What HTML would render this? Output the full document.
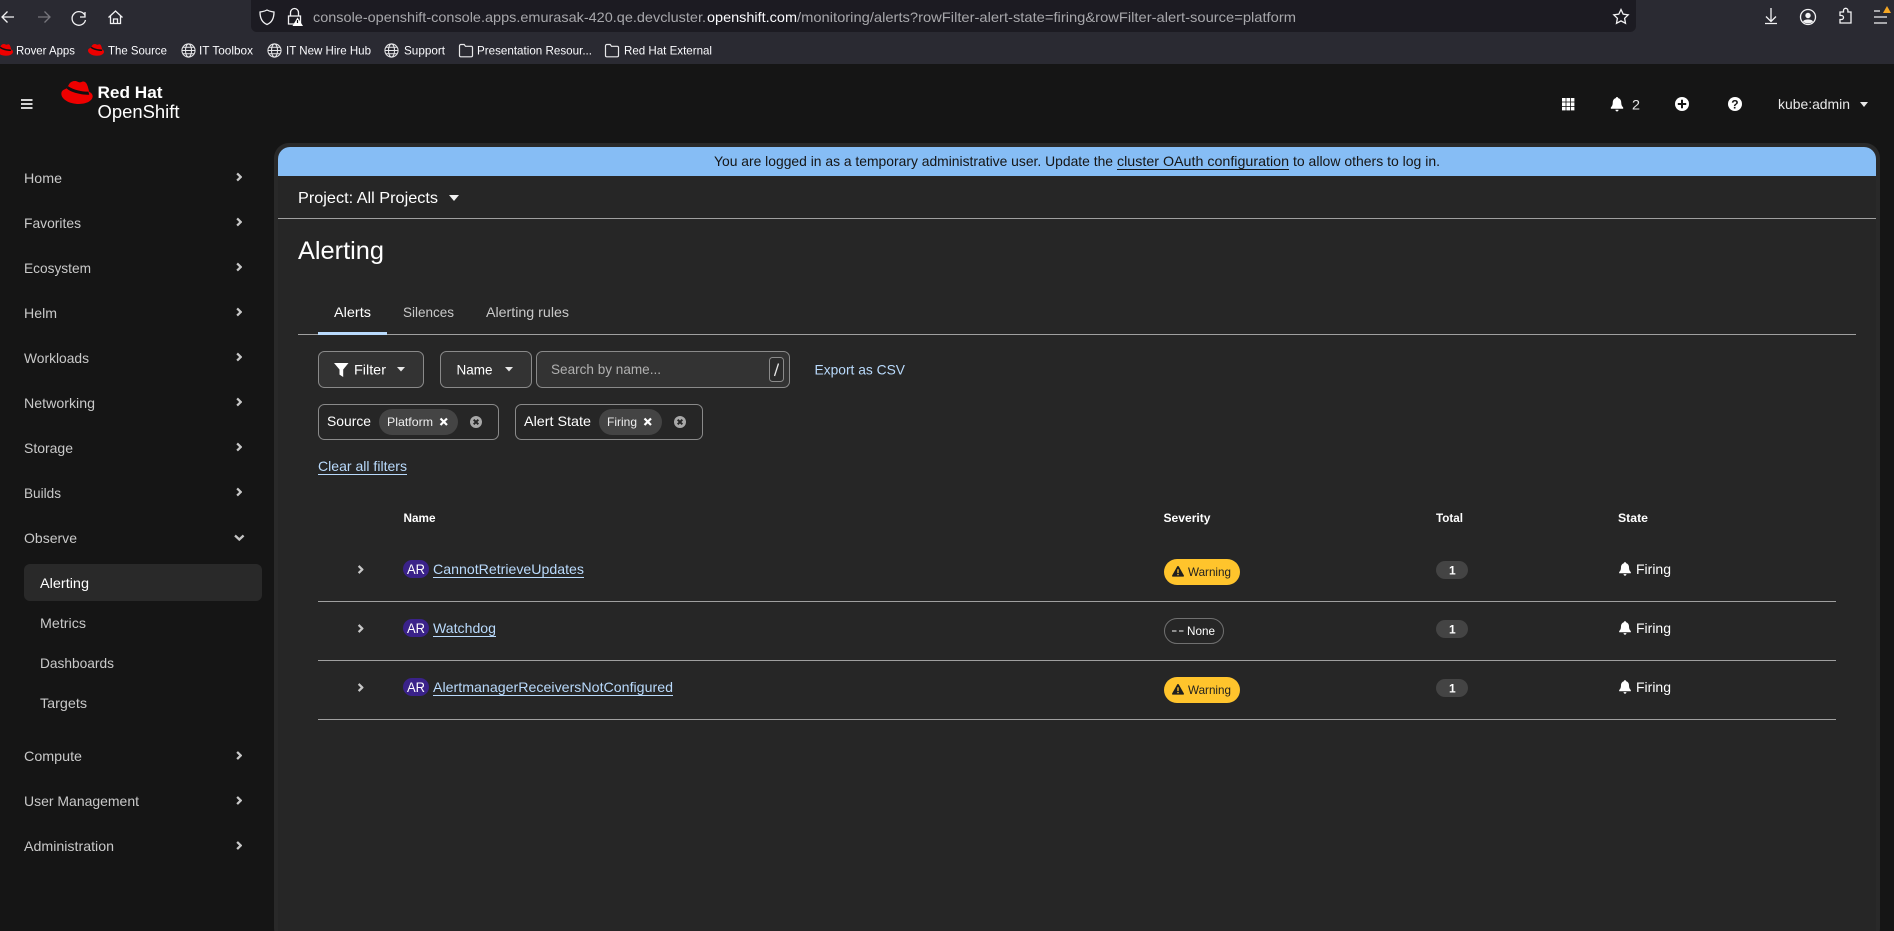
<!DOCTYPE html>
<html lang="en"><head><meta charset="utf-8"><title>Alerting</title>
<style>
html,body{margin:0;padding:0;background:#151515;overflow:hidden;width:1894px;height:931px}
svg{display:block;position:absolute;left:0;top:0}
text{font-family:"Liberation Sans",sans-serif;font-size:14px;fill:#fff;white-space:pre}
.n{fill:#c9c9c9}.l{fill:#b9dafc}.b{font-size:12px;fill:#eee}.h{font-size:12px;font-weight:700}
.ic{fill:none;stroke:#e8e8ea;stroke-width:1.3}
.ch{fill:none;stroke:#c4c4c4;stroke-width:2}
.cs{fill:none;stroke:#c8c8c8;stroke-width:3}
</style></head><body>
<svg width="1894" height="931" viewBox="0 0 1894 931" xmlns="http://www.w3.org/2000/svg">
<defs>
<symbol id="hat" viewBox="0 0 32 24" overflow="visible"><path fill="#ee0000" d="M14 0c2 0 3 1.400 5 1.400S21 .4 23 .6c2 .2 3.200 2.400 4 5l1.500 5.500c2 1 3.500 2.400 3.500 4.400 0 4.500-6 8-14 8C8 23.500 0 18.500 0 13c0-1.500.6-3 2-3.800C3 8.600 4.500 8 5.500 7.500L8 3C9.300 1 11.500 0 14 0z"/><path fill="#111" d="M5.500 7.500c3 3.300 12 6.400 23 6.600l-.8-3.200C21 11 12 9 6.800 5.200z"/></symbol>
<symbol id="globe" viewBox="0 0 16 16"><g fill="none" stroke="#e8e8ea" stroke-width="1.100"><circle cx="8" cy="8" r="7"/><ellipse cx="8" cy="8" rx="3.200" ry="7"/><path d="M1 8h14M2 4.500h12M2 11.500h12"/></g></symbol>
<symbol id="folder" viewBox="0 0 16 16"><path fill="none" stroke="#e8e8ea" stroke-width="1.200" d="M1.500 3.500c0-.8.500-1.500 1.300-1.500h3.400l1.300 1.800h5.700c.8 0 1.300.6 1.300 1.300v7.900c0 .8-.6 1.300-1.300 1.300H2.800c-.8 0-1.300-.6-1.300-1.300z"/></symbol>
<symbol id="cr" viewBox="0 0 8 12"><path class="cs" d="M1.500 1.200 6.300 6 1.500 10.800"/></symbol>
<symbol id="bell" viewBox="0 0 14 16"><path fill="#fff" d="M7 0c.8 0 1.300.6 1.300 1.300 2.400.6 3.400 2.700 3.400 5.200 0 2.300.8 3.800 2.100 5V13H.2v-1.500c1.300-1.200 2.100-2.700 2.100-5 0-2.500 1-4.600 3.400-5.200C5.700.6 6.200 0 7 0zM5.300 14h3.400c0 1.100-.8 1.900-1.700 1.900S5.300 15.100 5.300 14z"/></symbol>
<symbol id="tri" viewBox="0 0 14 13"><path fill="#1f1f1f" d="M7 0c.4 0 .7.2.9.5l6 10.600c.4.700-.1 1.500-.9 1.500H1c-.8 0-1.300-.8-.9-1.500L6.100.5C6.300.2 6.600 0 7 0z"/><path fill="#ffc42c" d="M6.200 3.800h1.600v4.600H6.200zM6.200 9.400h1.600v1.500H6.200z"/></symbol>
<symbol id="xc" viewBox="0 0 12 12"><circle cx="6" cy="6" r="6" fill="#a8a8a8"/><path stroke="#262626" stroke-width="2" d="M3.700 3.700l4.600 4.600M8.300 3.700 3.700 8.300"/></symbol>
</defs>

<!-- browser chrome -->
<rect width="1894" height="64" fill="#2a2a32"/>
<rect x="251" y="-6" width="1385" height="38" rx="6" fill="#1c1b22"/>
<g class="ic" stroke-width="1.400">
<path d="M14 17H2M7.500 11.500 2 17l5.500 5.500" style="stroke:#f2f2f4"/>
<path d="M38 17h12M44.500 11.500 50 17l-5.500 5.500" style="stroke:#77767d"/>
<path d="M85 12v5h-5M85 15.500A6.800 6.800 0 1 0 85.500 20" style="stroke:#f2f2f4"/>
<path d="M108.500 17.500 115.500 11l7 6.500M110.500 16v7.500h10V16M113.500 23.500v-4.500h4v4.500" style="stroke:#f2f2f4"/>
<path d="M267 10c2.500 1.500 4.500 1.500 7 2 0 6-2 10.500-7 12.500-5-2-7-6.500-7-12.500 2.500-.5 4.500-.5 7-2z" style="stroke:#f2f2f4"/>
<path d="M290.500 16v-3.500a4 4 0 0 1 8 0V16M288.500 16h12v8h-12z" style="stroke:#f2f2f4"/>
</g>
<path d="M297.500 17.500 303 26h-10.500z" fill="#fff"/><path d="M297.500 20v3" stroke="#111" stroke-width="1.200"/>
<text x="313" y="22" textLength="393" lengthAdjust="spacingAndGlyphs" style="fill:#a7a7ab">console-openshift-console.apps.emurasak-420.qe.devcluster.</text>
<text x="707" y="22" textLength="90" lengthAdjust="spacingAndGlyphs" style="fill:#fbfbfe">openshift.com</text>
<text x="797" y="22" textLength="499" lengthAdjust="spacingAndGlyphs" style="fill:#a7a7ab">/monitoring/alerts?rowFilter-alert-state=firing&amp;rowFilter-alert-source=platform</text>
<path class="ic" d="M1621 9.500l2.200 4.600 5 .7-3.600 3.500.9 5-4.500-2.400-4.500 2.400.9-5-3.600-3.500 5-.7z" style="stroke:#f2f2f4"/>
<g class="ic" style="stroke:#f2f2f4">
<path d="M1771 8v13M1766 16.500l5 5 5-5M1765 23.500h12" style="stroke:#f2f2f4"/>
<circle cx="1808" cy="17" r="7.500" style="stroke:#f2f2f4"/>
<path d="M1840 12h3.500v-1.500a2.200 2.200 0 0 1 4.400 0V12h3.100v11h-11v-3.500h1.500a2 2 0 0 0 0-4H1840z" style="stroke:#f2f2f4"/>
<path d="M1874 11h6M1874 17h13M1874 23h13" style="stroke:#f2f2f4"/>
</g>
<circle cx="1808" cy="15.500" r="2.700" fill="#f2f2f4"/><path d="M1803 21.500c1-2.700 9-2.700 10 0-2 2.500-8 2.500-10 0z" fill="#f2f2f4"/>
<path d="M1887 6l4 7h-8z" fill="#f5a623"/>

<use href="#hat" x="-3" y="44" width="16" height="12"/>
<text x="16" y="54.500" textLength="59" lengthAdjust="spacingAndGlyphs" class="b" style="fill:#fbfbfe">Rover Apps</text>
<use href="#hat" x="88" y="44" width="16" height="12"/>
<text x="108" y="54.500" textLength="59" lengthAdjust="spacingAndGlyphs" class="b" style="fill:#fbfbfe">The Source</text>
<use href="#globe" x="181" y="43" width="15" height="15"/>
<text x="199" y="54.500" textLength="54" lengthAdjust="spacingAndGlyphs" class="b" style="fill:#fbfbfe">IT Toolbox</text>
<use href="#globe" x="267" y="43" width="15" height="15"/>
<text x="286" y="54.500" textLength="85" lengthAdjust="spacingAndGlyphs" class="b" style="fill:#fbfbfe">IT New Hire Hub</text>
<use href="#globe" x="384" y="43" width="15" height="15"/>
<text x="404" y="54.500" textLength="41" lengthAdjust="spacingAndGlyphs" class="b" style="fill:#fbfbfe">Support</text>
<use href="#folder" x="458" y="42.500" width="16" height="16"/>
<text x="477" y="54.500" textLength="115" lengthAdjust="spacingAndGlyphs" class="b" style="fill:#fbfbfe">Presentation Resour...</text>
<use href="#folder" x="604" y="42.500" width="16" height="16"/>
<text x="624" y="54.500" textLength="88" lengthAdjust="spacingAndGlyphs" class="b" style="fill:#fbfbfe">Red Hat External</text>

<!-- masthead -->
<path d="M21 100h11.500M21 104h11.500M21 108h11.500" stroke="#f0f0f0" stroke-width="1.700"/>
<use href="#hat" x="61" y="81" width="32" height="23.500"/>
<text x="97.500" y="98" textLength="65" lengthAdjust="spacingAndGlyphs" style="font-size:17px;font-weight:700">Red Hat</text>
<text x="97.500" y="118" textLength="82" lengthAdjust="spacingAndGlyphs" style="font-size:18px">OpenShift</text>

<g fill="#fff"><rect x="1562" y="98" width="3.600" height="3.600"/><rect x="1566.400" y="98" width="3.600" height="3.600"/><rect x="1570.800" y="98" width="3.600" height="3.600"/><rect x="1562" y="102.400" width="3.600" height="3.600"/><rect x="1566.400" y="102.400" width="3.600" height="3.600"/><rect x="1570.800" y="102.400" width="3.600" height="3.600"/><rect x="1562" y="106.800" width="3.600" height="3.600"/><rect x="1566.400" y="106.800" width="3.600" height="3.600"/><rect x="1570.800" y="106.800" width="3.600" height="3.600"/></g>
<use href="#bell" x="1610.500" y="97" width="13" height="14.500"/>
<text x="1632" y="109.500" textLength="8" lengthAdjust="spacingAndGlyphs" style="fill:#e8e8e8">2</text>
<circle cx="1682" cy="104" r="7" fill="#fff"/><path d="M1682 99.800v8.400M1677.800 104h8.400" stroke="#151515" stroke-width="2"/>
<circle cx="1735" cy="104" r="7" fill="#fff"/>
<text x="1731.300" y="108.500" style="font-size:12px;font-weight:700;fill:#151515">?</text>
<text x="1778" y="109" textLength="72" lengthAdjust="spacingAndGlyphs" style="fill:#e8e8e8">kube:admin</text>
<path d="M1860 102h8l-4 5z" fill="#e8e8e8"/>

<!-- sidebar -->
<rect x="274" y="143" width="1606" height="800" rx="15" fill="#292929"/>
<rect x="278" y="147" width="1598" height="800" rx="12" fill="#262626"/>
<text class="n" x="24" y="183" textLength="38" lengthAdjust="spacingAndGlyphs">Home</text>
<text class="n" x="24" y="228" textLength="57" lengthAdjust="spacingAndGlyphs">Favorites</text>
<text class="n" x="24" y="273" textLength="67" lengthAdjust="spacingAndGlyphs">Ecosystem</text>
<text class="n" x="24" y="318" textLength="33" lengthAdjust="spacingAndGlyphs">Helm</text>
<text class="n" x="24" y="363" textLength="65" lengthAdjust="spacingAndGlyphs">Workloads</text>
<text class="n" x="24" y="408" textLength="71" lengthAdjust="spacingAndGlyphs">Networking</text>
<text class="n" x="24" y="453" textLength="49" lengthAdjust="spacingAndGlyphs">Storage</text>
<text class="n" x="24" y="498" textLength="37" lengthAdjust="spacingAndGlyphs">Builds</text>
<text class="n" x="24" y="543" textLength="53" lengthAdjust="spacingAndGlyphs">Observe</text>
<rect x="24" y="564" width="238" height="37" rx="6" fill="#292929"/>
<text x="40" y="588" textLength="49" lengthAdjust="spacingAndGlyphs">Alerting</text>
<text class="n" x="40" y="628" textLength="46" lengthAdjust="spacingAndGlyphs">Metrics</text>
<text class="n" x="40" y="668" textLength="74" lengthAdjust="spacingAndGlyphs">Dashboards</text>
<text class="n" x="40" y="708" textLength="47" lengthAdjust="spacingAndGlyphs">Targets</text>
<text class="n" x="24" y="761" textLength="58" lengthAdjust="spacingAndGlyphs">Compute</text>
<text class="n" x="24" y="806" textLength="115" lengthAdjust="spacingAndGlyphs">User Management</text>
<text class="n" x="24" y="851" textLength="90" lengthAdjust="spacingAndGlyphs">Administration</text>
<use href="#cr" x="236" y="172.500" width="6" height="9"/>
<use href="#cr" x="236" y="217.500" width="6" height="9"/>
<use href="#cr" x="236" y="262.500" width="6" height="9"/>
<use href="#cr" x="236" y="307.500" width="6" height="9"/>
<use href="#cr" x="236" y="352.500" width="6" height="9"/>
<use href="#cr" x="236" y="397.500" width="6" height="9"/>
<use href="#cr" x="236" y="442.500" width="6" height="9"/>
<use href="#cr" x="236" y="487.500" width="6" height="9"/>
<path class="ch" style="stroke-width:2.300" d="M235 535.500l4.300 4 4.300-4"/>
<use href="#cr" x="236" y="751" width="6" height="9"/>
<use href="#cr" x="236" y="796" width="6" height="9"/>
<use href="#cr" x="236" y="841" width="6" height="9"/>

<!-- banner -->
<path d="M278 176v-17a12 12 0 0 1 12-12h1574a12 12 0 0 1 12 12v17z" fill="#86bdf5"/>
<text x="714" y="166" textLength="399" lengthAdjust="spacingAndGlyphs" style="fill:#151515">You are logged in as a temporary administrative user. Update the</text>
<text x="1117" y="166" textLength="172" lengthAdjust="spacingAndGlyphs" style="fill:#151515">cluster OAuth configuration</text>
<rect x="1117" y="169" width="172" height="1" fill="#151515"/>
<text x="1293" y="166" textLength="147" lengthAdjust="spacingAndGlyphs" style="fill:#151515">to allow others to log in.</text>

<!-- project bar -->
<text x="298" y="203" textLength="140" lengthAdjust="spacingAndGlyphs" style="font-size:16px">Project: All Projects</text>
<path d="M449 195h10l-5 6z" fill="#f0f0f0"/>
<rect x="278" y="218" width="1598" height="1" fill="#a0a0a0"/>
<text x="298" y="259" textLength="86" lengthAdjust="spacingAndGlyphs" style="font-size:25px">Alerting</text>

<!-- tabs -->
<text x="334" y="317" textLength="37" lengthAdjust="spacingAndGlyphs">Alerts</text>
<text x="403" y="317" textLength="51" lengthAdjust="spacingAndGlyphs" style="fill:#c9c9c9">Silences</text>
<text x="486" y="317" textLength="83" lengthAdjust="spacingAndGlyphs" style="fill:#c9c9c9">Alerting rules</text>
<rect x="298" y="334" width="1558" height="1" fill="#a0a0a0"/>
<rect x="318" y="332" width="69" height="3" fill="#b9dafc"/>

<!-- toolbar -->
<g fill="#333" stroke="#8a8a8a">
<rect x="318.500" y="351.500" width="105" height="36" rx="6"/>
<rect x="440.500" y="351.500" width="91" height="36" rx="6"/>
<rect x="536.500" y="351.500" width="253" height="36" rx="6"/>
<rect x="769.500" y="357.500" width="14" height="24" rx="3" fill="#2b2b2b"/>
</g>
<path d="M334 363h14.500l-5.300 6.500v7.500l-3.700-2.400v-5.100z" fill="#fff"/>
<text x="354" y="374.500" textLength="32" lengthAdjust="spacingAndGlyphs">Filter</text>
<path d="M397 367h8l-4 4.500z" fill="#e8e8e8"/>
<text x="456.500" y="374.500" textLength="36" lengthAdjust="spacingAndGlyphs">Name</text>
<path d="M505 367h8l-4 4.500z" fill="#e8e8e8"/>
<text x="551" y="374" textLength="110" lengthAdjust="spacingAndGlyphs" style="fill:#b0b0b0">Search by name...</text>
<path d="M774.500 376 778.500 363.500" stroke="#e6e6e6" stroke-width="1.300"/>
<text class="l" x="814.500" y="374.500" textLength="90.500" lengthAdjust="spacingAndGlyphs">Export as CSV</text>

<!-- chips -->
<g fill="none" stroke="#8a8a8a">
<rect x="318.500" y="404.500" width="180" height="35" rx="6"/>
<rect x="515.500" y="404.500" width="187" height="35" rx="6"/>
</g>
<text x="327" y="426" textLength="44" lengthAdjust="spacingAndGlyphs">Source</text>
<rect x="379" y="409" width="79" height="26" rx="13" fill="#444"/>
<text x="387" y="426" textLength="46" lengthAdjust="spacingAndGlyphs" class="b">Platform</text>
<path d="M440.500 418.500l6.500 6.500M447 418.500l-6.500 6.500" stroke="#fff" stroke-width="2.200"/>
<use href="#xc" x="470" y="416" width="12" height="12"/>
<text x="524" y="426" textLength="67" lengthAdjust="spacingAndGlyphs">Alert State</text>
<rect x="599" y="409" width="63" height="26" rx="13" fill="#444"/>
<text x="607" y="426" textLength="30" lengthAdjust="spacingAndGlyphs" class="b">Firing</text>
<path d="M644.500 418.500l6.500 6.500M651 418.500l-6.500 6.500" stroke="#fff" stroke-width="2.200"/>
<use href="#xc" x="674" y="416" width="12" height="12"/>
<text class="l" x="318" y="471" textLength="89" lengthAdjust="spacingAndGlyphs">Clear all filters</text>
<rect x="318" y="474" width="89" height="1" fill="#b9dafc"/>

<!-- table header -->
<text class="h" x="403.500" y="522" textLength="32" lengthAdjust="spacingAndGlyphs">Name</text>
<text class="h" x="1163.500" y="522" textLength="47" lengthAdjust="spacingAndGlyphs">Severity</text>
<text class="h" x="1436" y="522" textLength="27" lengthAdjust="spacingAndGlyphs">Total</text>
<text class="h" x="1618" y="522" textLength="30" lengthAdjust="spacingAndGlyphs">State</text>

<!-- rows -->
<g fill="#a0a0a0"><rect x="318" y="601" width="1518" height="1"/><rect x="318" y="660" width="1518" height="1"/><rect x="318" y="719" width="1518" height="1"/></g>
<g>
<use href="#cr" x="357.500" y="565" width="6" height="9"/>
<use href="#cr" x="357.500" y="624" width="6" height="9"/>
<use href="#cr" x="357.500" y="683" width="6" height="9"/>
<rect x="403" y="560" width="26" height="18" rx="9" fill="#3a2289"/>
<rect x="403" y="619" width="26" height="18" rx="9" fill="#3a2289"/>
<rect x="403" y="678" width="26" height="18" rx="9" fill="#3a2289"/>
<text x="407" y="574" textLength="18" lengthAdjust="spacingAndGlyphs">AR</text>
<text x="407" y="633" textLength="18" lengthAdjust="spacingAndGlyphs">AR</text>
<text x="407" y="692" textLength="18" lengthAdjust="spacingAndGlyphs">AR</text>
<text class="l" x="433" y="574" textLength="151" lengthAdjust="spacingAndGlyphs">CannotRetrieveUpdates</text>
<rect x="433" y="577" width="151" height="1" fill="#b9dafc"/>
<text class="l" x="433" y="633" textLength="63" lengthAdjust="spacingAndGlyphs">Watchdog</text>
<rect x="433" y="636" width="63" height="1" fill="#b9dafc"/>
<text class="l" x="433" y="692" textLength="240" lengthAdjust="spacingAndGlyphs">AlertmanagerReceiversNotConfigured</text>
<rect x="433" y="695" width="240" height="1" fill="#b9dafc"/>

<rect x="1164" y="559" width="76" height="26" rx="13" fill="#ffc42c"/>
<use href="#tri" x="1172" y="566" width="12" height="11"/>
<text x="1188" y="576" textLength="43" lengthAdjust="spacingAndGlyphs" style="font-size:12px;fill:#1f1f1f">Warning</text>
<rect x="1164.500" y="618.500" width="59" height="25" rx="12.500" fill="none" stroke="#707070"/>
<path d="M1172 631h4.500M1179 631h4.500" stroke="#b0b0b0" stroke-width="1.600"/>
<text x="1187" y="635" textLength="28" lengthAdjust="spacingAndGlyphs" style="font-size:12px">None</text>
<rect x="1164" y="677" width="76" height="26" rx="13" fill="#ffc42c"/>
<use href="#tri" x="1172" y="684" width="12" height="11"/>
<text x="1188" y="694" textLength="43" lengthAdjust="spacingAndGlyphs" style="font-size:12px;fill:#1f1f1f">Warning</text>

<rect x="1436" y="561" width="32" height="18" rx="9" fill="#444"/>
<rect x="1436" y="620" width="32" height="18" rx="9" fill="#444"/>
<rect x="1436" y="679" width="32" height="18" rx="9" fill="#444"/>
<text x="1449" y="574.500" style="font-size:12px;font-weight:700">1</text>
<text x="1449" y="633.500" style="font-size:12px;font-weight:700">1</text>
<text x="1449" y="692.500" style="font-size:12px;font-weight:700">1</text>

<use href="#bell" x="1619" y="562" width="12" height="14"/>
<use href="#bell" x="1619" y="621" width="12" height="14"/>
<use href="#bell" x="1619" y="680" width="12" height="14"/>
<text x="1636" y="574" textLength="35" lengthAdjust="spacingAndGlyphs">Firing</text>
<text x="1636" y="633" textLength="35" lengthAdjust="spacingAndGlyphs">Firing</text>
<text x="1636" y="692" textLength="35" lengthAdjust="spacingAndGlyphs">Firing</text>
</g>
</svg>
</body></html>
